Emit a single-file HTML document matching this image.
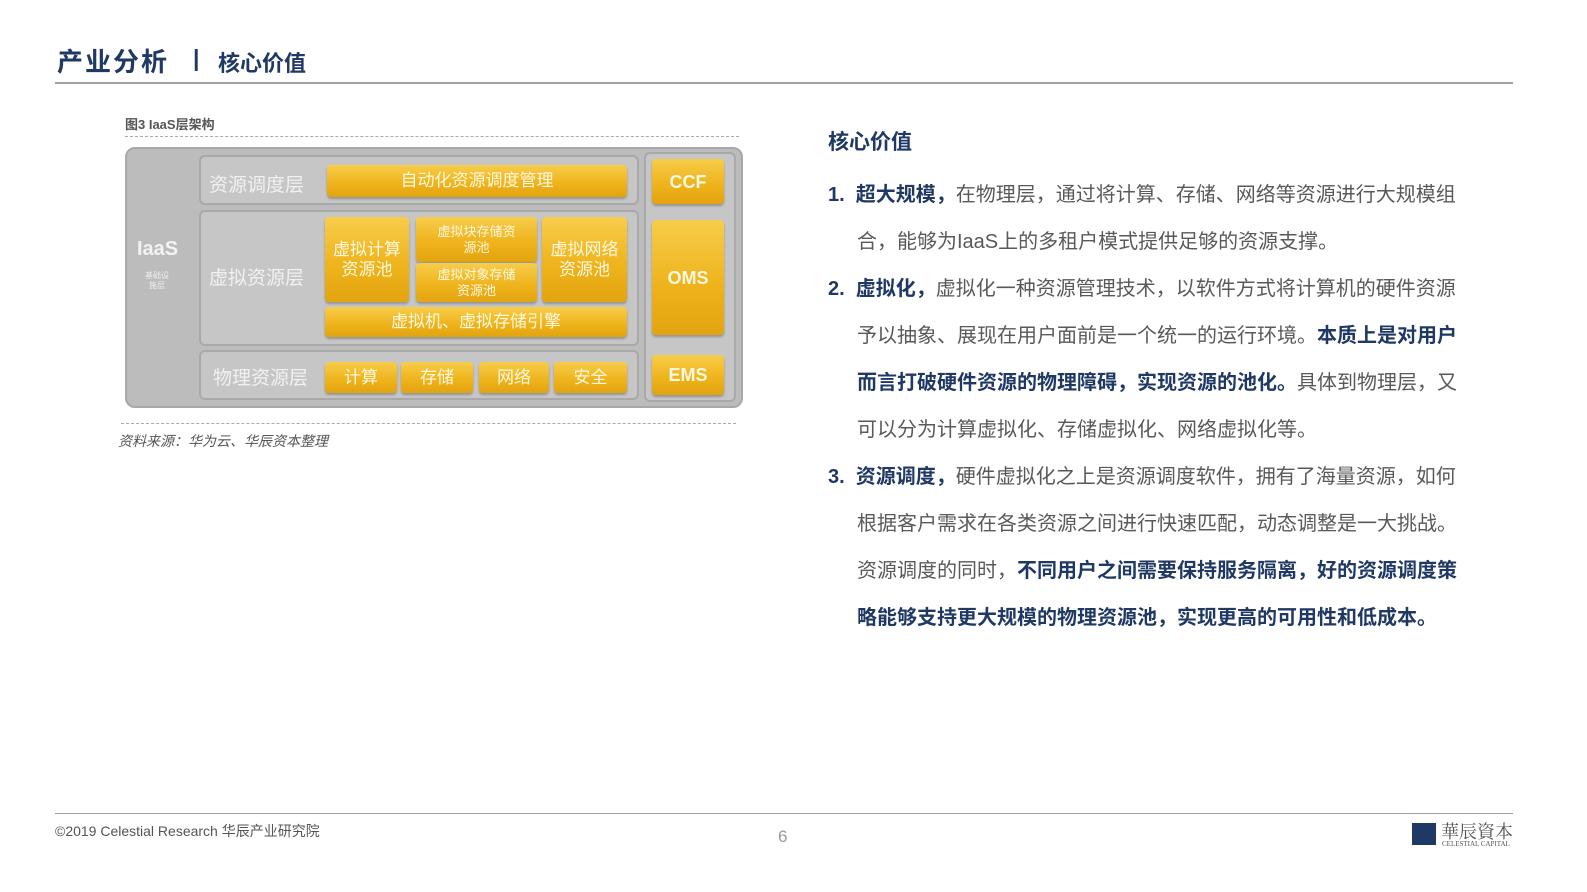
<!DOCTYPE html>
<html><head><meta charset="utf-8"><style>
*{margin:0;padding:0;box-sizing:border-box}
body{width:1587px;height:892px;background:#fff;position:relative;overflow:hidden;font-family:"Liberation Sans","Noto Sans CJK SC",sans-serif}
.a{position:absolute;white-space:nowrap}
.y{position:absolute;background:linear-gradient(#f7cd4a,#eeb21a 60%,#e2a410);border-radius:4px;box-shadow:0 2px 2px rgba(0,0,0,.25);color:#fff8e0;display:flex;align-items:center;justify-content:center;text-align:center;font-size:17px;line-height:20px}
.p{position:absolute;background:#c6c6c6;border:2px solid #a9a9a9;border-radius:6px}
.l{position:absolute;color:#f1f1f1;font-size:19px}
.t{font-size:20px;color:#595959}
.b{color:#1f3864;font-weight:bold}
</style></head><body>
<div class="a" style="left:57px;top:42px;font-size:26px;font-weight:bold;color:#1f3864;letter-spacing:2px">产业分析</div>
<div class="a" style="left:193px;top:45px;font-size:23px;font-weight:900;color:#1f3864">|</div>
<div class="a" style="left:218px;top:46px;font-size:22px;font-weight:bold;color:#1f3864">核心价值</div>
<div class="a" style="left:55px;top:82px;width:1458px;height:2px;background:#a0a0a0"></div>

<div class="a" style="left:125px;top:114px;font-size:13px;font-weight:bold;color:#555">图3 IaaS层架构</div>
<div class="a" style="left:125px;top:136px;width:614px;border-top:1px dashed #aaa"></div>
<div class="a" style="left:125px;top:147px;width:618px;height:261px;background:#bcbcbc;border:2px solid #a8a8a8;border-radius:10px"></div>
<div class="a" style="left:137px;top:238px;font-size:20px;font-weight:bold;color:#f3f3f3">IaaS</div>
<div class="a" style="left:145px;top:271px;font-size:8px;color:#eee;line-height:10px;text-align:center">基础设<br>施层</div>
<div class="p" style="left:199px;top:155px;width:440px;height:50px"></div>
<div class="p" style="left:199px;top:210px;width:440px;height:136px"></div>
<div class="p" style="left:199px;top:350px;width:440px;height:50px"></div>
<div class="p" style="left:644px;top:152px;width:92px;height:250px"></div>
<div class="l" style="left:209px;top:170px">资源调度层</div>
<div class="l" style="left:209px;top:263px">虚拟资源层</div>
<div class="l" style="left:213px;top:363px">物理资源层</div>
<div class="y" style="left:327px;top:165px;width:300px;height:32px">自动化资源调度管理</div>
<div class="y" style="left:652px;top:159px;width:72px;height:45px;font-weight:bold;font-size:18px">CCF</div>
<div class="y" style="left:325px;top:217px;width:84px;height:85px;font-size:17px">虚拟计算<br>资源池</div>
<div class="y" style="left:416px;top:217px;width:121px;height:45px;font-size:13px;line-height:16px">虚拟块存储资<br>源池</div>
<div class="y" style="left:416px;top:263px;width:121px;height:39px;font-size:13px;line-height:16px">虚拟对象存储<br>资源池</div>
<div class="y" style="left:542px;top:217px;width:85px;height:85px">虚拟网络<br>资源池</div>
<div class="y" style="left:325px;top:307px;width:302px;height:30px">虚拟机、虚拟存储引擎</div>
<div class="y" style="left:652px;top:220px;width:72px;height:115px;font-weight:bold;font-size:18px">OMS</div>
<div class="y" style="left:325px;top:362px;width:72px;height:31px">计算</div>
<div class="y" style="left:401px;top:362px;width:72px;height:31px">存储</div>
<div class="y" style="left:479px;top:362px;width:70px;height:31px">网络</div>
<div class="y" style="left:554px;top:362px;width:73px;height:31px">安全</div>
<div class="y" style="left:652px;top:355px;width:72px;height:40px;font-weight:bold;font-size:18px">EMS</div>
<div class="a" style="left:121px;top:423px;width:615px;border-top:1px dashed #aaa"></div>
<div class="a" style="left:118px;top:431px;font-size:14px;font-style:italic;color:#555">资料来源：华为云、华辰资本整理</div>

<div class="a" style="left:828px;top:126px;font-size:21px;font-weight:bold;color:#1f3864">核心价值</div>
<div class="a t" style="left:828px;top:178px"><span class="b">1.&nbsp;&nbsp;超大规模，</span>在物理层，通过将计算、存储、网络等资源进行大规模组</div>
<div class="a t" style="left:857px;top:225px">合，能够为IaaS上的多租户模式提供足够的资源支撑。</div>
<div class="a t" style="left:828px;top:272px"><span class="b">2.&nbsp;&nbsp;虚拟化，</span>虚拟化一种资源管理技术，以软件方式将计算机的硬件资源</div>
<div class="a t" style="left:857px;top:319px">予以抽象、展现在用户面前是一个统一的运行环境。<span class="b">本质上是对用户</span></div>
<div class="a t" style="left:857px;top:366px"><span class="b">而言打破硬件资源的物理障碍，实现资源的池化。</span>具体到物理层，又</div>
<div class="a t" style="left:857px;top:413px">可以分为计算虚拟化、存储虚拟化、网络虚拟化等。</div>
<div class="a t" style="left:828px;top:460px"><span class="b">3.&nbsp;&nbsp;资源调度，</span>硬件虚拟化之上是资源调度软件，拥有了海量资源，如何</div>
<div class="a t" style="left:857px;top:507px">根据客户需求在各类资源之间进行快速匹配，动态调整是一大挑战。</div>
<div class="a t" style="left:857px;top:554px">资源调度的同时，<span class="b">不同用户之间需要保持服务隔离，好的资源调度策</span></div>
<div class="a t" style="left:857px;top:601px"><span class="b">略能够支持更大规模的物理资源池，实现更高的可用性和低成本。</span></div>

<div class="a" style="left:55px;top:813px;width:1458px;height:1px;background:#a0a0a0"></div>
<div class="a" style="left:55px;top:821px;font-size:14px;color:#555">©2019 Celestial Research 华辰产业研究院</div>
<div class="a" style="left:778px;top:827px;font-size:17px;color:#999">6</div>
<div class="a" style="left:1412px;top:823px;width:24px;height:22px;background:#1f3864"></div>
<div class="a" style="left:1441px;top:818px;font-size:18px;color:#555;font-family:'Noto Serif CJK SC',serif">華辰資本</div>
<div class="a" style="left:1442px;top:840px;font-size:7px;color:#555;font-family:'Liberation Serif',serif">CELESTIAL CAPITAL</div>
</body></html>
